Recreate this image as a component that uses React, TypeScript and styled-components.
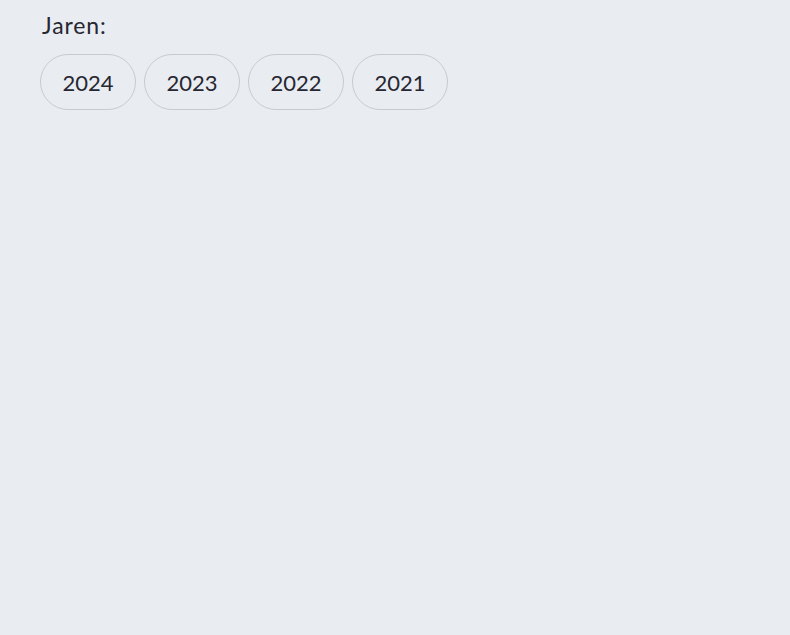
import React, { FC } from "react";
import styled, { createGlobalStyle } from "styled-components";

const GlobalStyle = createGlobalStyle`
  html, body {
    margin: 0;
    padding: 0;
    background: #e9ecf1;
  }
  body {
    font-family: "Source Sans Pro", Lato, "Noto Sans", sans-serif;
    color: #262730;
  }
`;

const years = [2024, 2023, 2022, 2021];

const App: FC = () => {
  return (
    <>
      <GlobalStyle />
      <Page>
        <LabelText>Jaren:</LabelText>
        <PillGroup>
          {years.map((year) => (
            <Pill key={year} type="button">
              {year}
            </Pill>
          ))}
        </PillGroup>
      </Page>
    </>
  );
};

const Page = styled.main`
  min-height: 635px;
  box-sizing: border-box;
  padding: 10px 40px;
  background: #e9ecf1;
`;

const LabelText = styled.div`
  font-size: 23px;
  line-height: 30px;
  letter-spacing: 0.9px;
  padding-left: 2px;
  margin-bottom: 14px;
`;

const PillGroup = styled.div`
  display: flex;
  gap: 8px;
`;

const Pill = styled.button`
  width: 96px;
  height: 56px;
  box-sizing: border-box;
  border: 1.5px solid #c7cacf;
  border-radius: 28px;
  background: transparent;
  font-family: inherit;
  font-size: 22px;
  color: #262730;
  padding: 0;
  cursor: pointer;
`;

export default App;
